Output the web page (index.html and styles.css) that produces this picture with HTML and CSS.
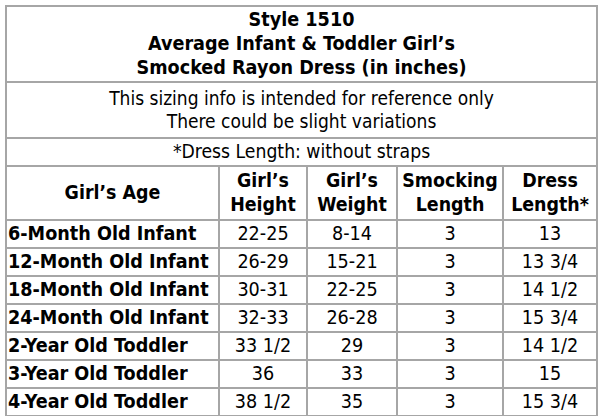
FILE: index.html
```html
<!DOCTYPE html>
<html>
<head>
<meta charset="utf-8">
<link rel="stylesheet" href="styles.css">
</head>
<body>
<table class="chart">
  <colgroup>
    <col class="c-age"><col class="c-h"><col class="c-w"><col class="c-s"><col class="c-d">
  </colgroup>
  <tr class="r-title"><td colspan="5">Style 1510<br>Average Infant &amp; Toddler Girl’s<br>Smocked Rayon Dress (in inches)</td></tr>
  <tr class="r-note"><td colspan="5">This sizing info is intended for reference only<br>There could be slight variations</td></tr>
  <tr class="r-dress"><td colspan="5">*Dress Length: without straps</td></tr>
  <tr class="r-head"><th>Girl’s Age</th><th>Girl’s<br>Height</th><th>Girl’s<br>Weight</th><th>Smocking<br>Length</th><th>Dress<br>Length*</th></tr>
  <tr class="r-data"><td class="age">6-Month Old Infant</td><td>22-25</td><td>8-14</td><td>3</td><td>13</td></tr>
  <tr class="r-data"><td class="age">12-Month Old Infant</td><td>26-29</td><td>15-21</td><td>3</td><td>13 3/4</td></tr>
  <tr class="r-data"><td class="age">18-Month Old Infant</td><td>30-31</td><td>22-25</td><td>3</td><td>14 1/2</td></tr>
  <tr class="r-data"><td class="age">24-Month Old Infant</td><td>32-33</td><td>26-28</td><td>3</td><td>15 3/4</td></tr>
  <tr class="r-data"><td class="age">2-Year Old Toddler</td><td>33 1/2</td><td>29</td><td>3</td><td>14 1/2</td></tr>
  <tr class="r-data"><td class="age">3-Year Old Toddler</td><td>36</td><td>33</td><td>3</td><td>15</td></tr>
  <tr class="r-data"><td class="age">4-Year Old Toddler</td><td>38 1/2</td><td>35</td><td>3</td><td>15 3/4</td></tr>
</table>
</body>
</html>
```
FILE: styles.css
```css
html, body {
  margin: 0;
  padding: 0;
  background: #ffffff;
}
body {
  padding: 5px 0 0 5px;
  font-family: "DejaVu Sans Condensed", "DejaVu Sans", sans-serif;
  color: #000;
}
.chart {
  border-collapse: collapse;
  table-layout: fixed;
  width: 591px;
}
.c-age { width: 213px; }
.c-h { width: 88px; }
.c-w { width: 90px; }
.c-s { width: 106px; }
.c-d { width: 94px; }
.chart td, .chart th {
  border: 2px solid #a6a6a6;
  padding: 0;
  text-align: center;
  vertical-align: middle;
}
.r-title td {
  height: 74px;
  font-weight: bold;
  font-size: 19.6px;
  line-height: 24px;
}
.r-note td {
  height: 54px;
  font-size: 19px;
  line-height: 23px;
}
.r-dress td {
  height: 26px;
  font-size: 19.2px;
  line-height: 22px;
}
.r-head th {
  height: 52px;
  font-size: 19.4px;
  line-height: 24px;
  font-weight: bold;
}
.r-data td {
  height: 26px;
  font-size: 19.6px;
  line-height: 24px;
}
.r-data td.age {
  text-align: left;
  padding-left: 1px;
  font-weight: bold;
}
```
